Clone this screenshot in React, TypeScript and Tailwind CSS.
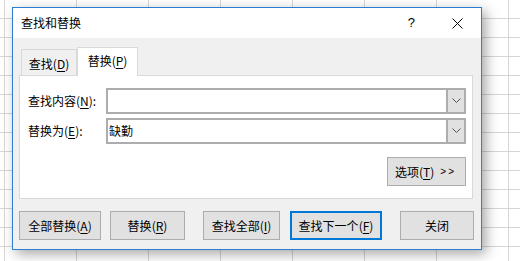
import React from 'react'

const FONT = 'font-["Microsoft_YaHei","Noto_Sans_CJK_SC",sans-serif]'

function Key({ k }: { k: string }) {
  return (
    <>
      (<span className="underline underline-offset-[2px]">{k}</span>)
    </>
  )
}

function Chevron() {
  return (
    <svg width="9" height="6" viewBox="0 0 9 6" fill="none">
      <path d="M0.5 0.5 L4.5 4.5 L8.5 0.5" stroke="#555" strokeWidth="1" />
    </svg>
  )
}

function Combo({ value }: { value?: string }) {
  return (
    <div className="flex h-[26px] w-[360px] border-2 border-[#adadad] bg-white">
      <div className="flex flex-1 items-center pl-[1px] text-[12px] text-black">{value}</div>
      <div className="flex w-[18px] items-center justify-center border-l-2 border-[#adadad] bg-[#e1e1e1]">
        <Chevron />
      </div>
    </div>
  )
}

function Button({
  children,
  width,
  className = '',
  focused = false,
}: {
  children: React.ReactNode
  width: string
  className?: string
  focused?: boolean
}) {
  return (
    <div
      className={`flex h-[29px] items-center justify-center bg-[#e1e1e1] text-[12px] text-black ${width} ${
        focused ? 'border-2 border-[#0078d7]' : 'border border-[#adadad]'
      } ${className}`}
    >
      {children}
    </div>
  )
}

export default function App() {
  return (
    <div
      className={`relative h-[261px] w-[520px] overflow-hidden bg-white bg-[linear-gradient(to_right,#d6d6d6_1px,transparent_1px),linear-gradient(to_bottom,#d6d6d6_1px,transparent_1px)] bg-[size:72px_19px] bg-[position:4px_18px] ${FONT}`}
    >
      {/* dialog */}
      <div className="absolute left-[12px] top-[7px] flex h-[243px] w-[470px] flex-col border border-[#2a7fd4] bg-[#f0f0f0] shadow-[4px_4px_12px_rgba(0,0,0,0.35)]">
        {/* title bar */}
        <div className="flex h-[30px] items-center bg-white pl-[8px] text-[12px] text-black">
          <span>查找和替换</span>
          <span className="ml-auto mr-[37px] font-['Liberation_Sans',sans-serif] text-[13px]">?</span>
          <svg width="11" height="11" viewBox="0 0 11 11" className="mr-[18px]">
            <path d="M0.5 0.5 L10.5 10.5 M10.5 0.5 L0.5 10.5" stroke="#000" strokeWidth="1" />
          </svg>
        </div>

        {/* tabs */}
        <div className="ml-[6px] mt-[9px] flex h-[28px] items-end text-[12px] text-black">
          <div className="ml-[2px] flex h-[26px] w-[56px] items-center justify-center border border-b-0 border-[#d9d9d9] bg-[#f0f0f0] pt-[2px]">
            查找<Key k="D" />
          </div>
          <div className="relative z-10 -mb-[1px] flex h-[29px] w-[61px] items-center justify-center border border-b-0 border-[#d9d9d9] bg-white pb-[2px]">
            替换<Key k="P" />
          </div>
        </div>

        {/* panel */}
        <div className="ml-[6px] flex h-[124px] w-[454px] flex-col border border-[#d9d9d9] bg-white pl-[8px] pt-[12px] text-[12px] text-black">
          <div className="flex items-center">
            <span className="w-[78px]">
              查找内容<Key k="N" />:
            </span>
            <Combo />
          </div>
          <div className="mt-[4px] flex items-center">
            <span className="w-[78px]">
              替换为<Key k="E" />:
            </span>
            <Combo value="缺勤" />
          </div>
          <div className="mt-[13px] flex">
            <Button width="w-[79px]" className="ml-[359px] justify-start pl-[7px]">
              选项<Key k="T" />
              <span className="ml-[6px] font-['Liberation_Sans',sans-serif] text-[10px] tracking-[2px]">&gt;&gt;</span>
            </Button>
          </div>
        </div>

        {/* bottom buttons */}
        <div className="mt-[12px] flex">
          <Button width="w-[82px]" className="ml-[6px]">
            全部替换<Key k="A" />
          </Button>
          <Button width="w-[75px]" className="ml-[9px]">
            替换<Key k="R" />
          </Button>
          <Button width="w-[77px]" className="ml-[18px]">
            查找全部<Key k="I" />
          </Button>
          <Button width="w-[92px]" className="ml-[10px]" focused>
            查找下一个<Key k="F" />
          </Button>
          <Button width="w-[74px]" className="ml-[18px]">
            关闭
          </Button>
        </div>
      </div>
    </div>
  )
}
